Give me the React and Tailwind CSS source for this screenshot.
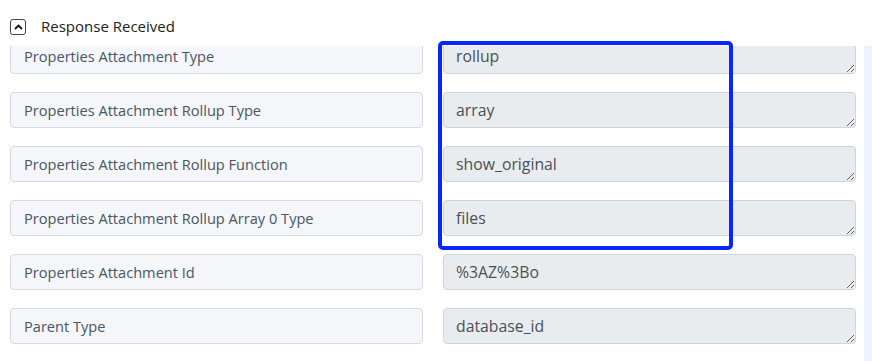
import { useEffect, useRef } from "react";

const ROWS = [
  { label: "Properties Attachment Type", value: "rollup" },
  { label: "Properties Attachment Rollup Type", value: "array" },
  { label: "Properties Attachment Rollup Function", value: "show_original" },
  { label: "Properties Attachment Rollup Array 0 Type", value: "files" },
  { label: "Properties Attachment Id", value: "%3AZ%3Bo" },
  { label: "Parent Type", value: "database_id" },
];

// ─── ROW ─────────────────────────────
function FieldRow({ label, value }) {
  return (
    <div className="grid grid-cols-[413px_413px] gap-x-[20px]">
      <div className="h-[36px] flex items-center pl-[13px] pt-[1px] bg-[#f4f6f9] border border-[#d5dae0] rounded-[4px] text-[14.6px] text-[#4a5565]">
        {label}
      </div>
      <textarea
        readOnly
        rows={1}
        value={value}
        className="h-[36px] block pl-[12px] pt-[6px] bg-[#e9ecef] border border-[#ced4da] rounded-[4px] text-[15.8px] text-[#495057] outline-none"
      />
    </div>
  );
}

// ─── MAIN ─────────────────────────────
export default function App() {
  const scrollRef = useRef(null);

  useEffect(() => {
    if (scrollRef.current) scrollRef.current.scrollTop = 8;
  }, []);

  return (
    <div
      className="relative w-[878px] h-[361px] bg-white overflow-hidden"
      style={{ fontFamily: '"Open Sans", "Noto Sans", sans-serif' }}
    >
      {/* HEADER */}
      <div className="h-[46px] flex items-center pl-[10px] pt-[7px] gap-[15px]">
        <div className="w-[16px] h-[16px] border border-[#444] rounded-[3px] flex items-center justify-center">
          <svg width="9" height="6" viewBox="0 0 9 6" fill="none">
            <path d="M1 5L4.5 1.5L8 5" stroke="#111" strokeWidth="1.8" />
          </svg>
        </div>
        <span className="text-[15px] text-[#222]">Response Received</span>
      </div>

      {/* BODY */}
      <div className="flex h-[315px]">
        <div ref={scrollRef} className="w-[864px] overflow-hidden">
          <div className="flex flex-col gap-[18px] pl-[10px] pb-[20px]">
            {ROWS.map((r) => (
              <FieldRow key={r.label} {...r} />
            ))}
          </div>
        </div>
        <div className="w-[8px] bg-[#eef4fd]" />
      </div>

      {/* HIGHLIGHT */}
      <div className="absolute left-[438px] top-[41px] w-[295px] h-[209px] border-[4px] border-[#0a26ff] rounded-[5px] pointer-events-none" />
    </div>
  );
}
